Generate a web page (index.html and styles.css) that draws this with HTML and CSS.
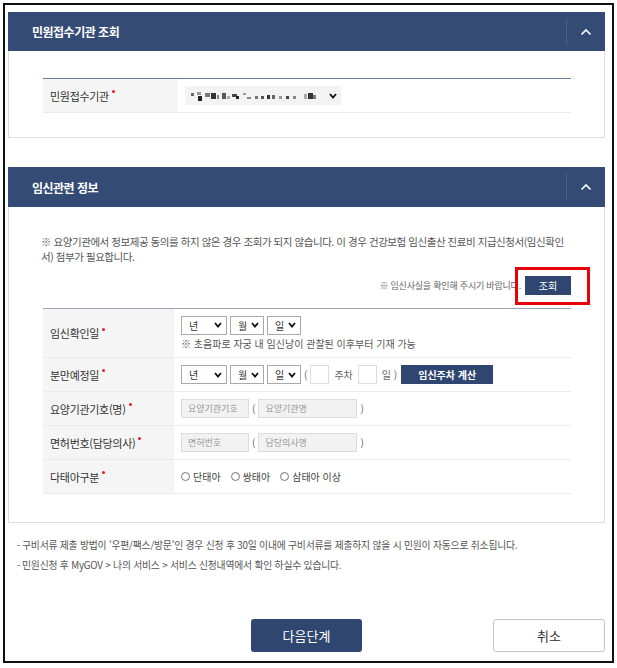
FILE: index.html
```html
<!DOCTYPE html>
<html lang="ko">
<head>
    <meta charset="UTF-8">
    <title>임신출산 진료비 신청</title>
    <link rel="stylesheet" href="styles.css">
</head>
<body>
    <div class="frame">
        <section class="panel">
            <div class="panel-head">
                <h2>민원접수기관 조회</h2>
                <span class="fold">
                    <svg width="12" height="8" viewBox="0 0 12 8"><path d="M1.5 6.5 L6 2 L10.5 6.5" fill="none" stroke="#fff" stroke-width="1.6"/></svg>
                </span>
            </div>
            <div class="panel-body body-1">
                <div class="form-table org-table">
                    <div class="row">
                        <div class="th">민원접수기관<span class="req"></span></div>
                        <div class="td">
                            <span class="select org-select">
                                <svg class="mosaic" width="140" height="12" viewBox="0 0 140 12">
                                    <rect x="2" y="3" width="3" height="3" fill="#666"/>
                                    <rect x="8" y="2" width="4" height="3" fill="#999"/>
                                    <rect x="9" y="6" width="4" height="5" fill="#222"/>
                                    <rect x="16" y="3" width="5" height="4" fill="#777"/>
                                    <rect x="22" y="3" width="5" height="6" fill="#333"/>
                                    <rect x="28" y="5" width="2" height="4" fill="#888"/>
                                    <rect x="33" y="3" width="4" height="6" fill="#555"/>
                                    <rect x="38" y="6" width="3" height="3" fill="#aaa"/>
                                    <rect x="43" y="4" width="5" height="3" fill="#444"/>
                                    <rect x="47" y="6" width="3" height="3" fill="#222"/>
                                    <rect x="54" y="3" width="3" height="2" fill="#999"/>
                                    <rect x="58" y="7" width="4" height="2" fill="#888"/>
                                    <rect x="66" y="6" width="3" height="3" fill="#777"/>
                                    <rect x="72" y="6" width="3" height="3" fill="#555"/>
                                    <rect x="78" y="5" width="3" height="4" fill="#333"/>
                                    <rect x="83" y="5" width="3" height="4" fill="#666"/>
                                    <rect x="90" y="6" width="3" height="3" fill="#999"/>
                                    <rect x="97" y="6" width="3" height="3" fill="#444"/>
                                    <rect x="104" y="6" width="3" height="3" fill="#888"/>
                                    <rect x="115" y="4" width="3" height="5" fill="#aaa"/>
                                    <rect x="119" y="3" width="5" height="6" fill="#333"/>
                                    <rect x="124" y="5" width="3" height="4" fill="#777"/>
                                </svg>
                                <svg class="chev" width="8" height="6" viewBox="0 0 8 6"><path d="M1 1 L4 4.5 L7 1" fill="none" stroke="#111" stroke-width="1.8"/></svg>
                            </span>
                        </div>
                    </div>
                </div>
            </div>
        </section>

        <section class="panel panel-2">
            <div class="panel-head">
                <h2>임신관련 정보</h2>
                <span class="fold">
                    <svg width="12" height="8" viewBox="0 0 12 8"><path d="M1.5 6.5 L6 2 L10.5 6.5" fill="none" stroke="#fff" stroke-width="1.6"/></svg>
                </span>
            </div>
            <div class="panel-body body-2">
                <p class="notice">※ 요양기관에서 정보제공 동의를 하지 않은 경우 조회가 되지 않습니다. 이 경우 건강보험 임신출산 진료비 지급신청서(임신확인서) 첨부가 필요합니다.</p>
                <div class="lookup">
                    <span class="lookup-text">※ 임신사실을 확인해 주시기 바랍니다.</span>
                    <button class="btn-navy btn-small">조회</button>
                    <span class="highlight"></span>
                </div>
                <div class="form-table info-table">
                    <div class="row row-tall">
                        <div class="th">임신확인일<span class="req"></span></div>
                        <div class="td">
                            <div class="inline">
                                <span class="select sel-year">년<svg width="8" height="6" viewBox="0 0 8 6"><path d="M1 1 L4 4.5 L7 1" fill="none" stroke="#111" stroke-width="1.8"/></svg></span>
                                <span class="select sel-short">월<svg width="8" height="6" viewBox="0 0 8 6"><path d="M1 1 L4 4.5 L7 1" fill="none" stroke="#111" stroke-width="1.8"/></svg></span>
                                <span class="select sel-short">일<svg width="8" height="6" viewBox="0 0 8 6"><path d="M1 1 L4 4.5 L7 1" fill="none" stroke="#111" stroke-width="1.8"/></svg></span>
                            </div>
                            <p class="hint">※ 초음파로 자궁 내 임신낭이 관찰된 이후부터 기재 가능</p>
                        </div>
                    </div>
                    <div class="row">
                        <div class="th">분만예정일<span class="req"></span></div>
                        <div class="td">
                            <div class="inline">
                                <span class="select sel-year">년<svg width="8" height="6" viewBox="0 0 8 6"><path d="M1 1 L4 4.5 L7 1" fill="none" stroke="#111" stroke-width="1.8"/></svg></span>
                                <span class="select sel-short">월<svg width="8" height="6" viewBox="0 0 8 6"><path d="M1 1 L4 4.5 L7 1" fill="none" stroke="#111" stroke-width="1.8"/></svg></span>
                                <span class="select sel-short">일<svg width="8" height="6" viewBox="0 0 8 6"><path d="M1 1 L4 4.5 L7 1" fill="none" stroke="#111" stroke-width="1.8"/></svg></span>
                                <span class="paren">(</span>
                                <span class="input input-tiny"></span>
                                <span class="unit">주차</span>
                                <span class="input input-tiny"></span>
                                <span class="unit">일 )</span>
                                <button class="btn-navy btn-calc">임신주차 계산</button>
                            </div>
                        </div>
                    </div>
                    <div class="row">
                        <div class="th">요양기관기호(명)<span class="req"></span></div>
                        <div class="td">
                            <div class="inline">
                                <span class="input input-code">요양기관기호</span>
                                <span class="paren">(</span>
                                <span class="input input-name">요양기관명</span>
                                <span class="paren">)</span>
                            </div>
                        </div>
                    </div>
                    <div class="row">
                        <div class="th">면허번호(담당의사)<span class="req"></span></div>
                        <div class="td">
                            <div class="inline">
                                <span class="input input-code">면허번호</span>
                                <span class="paren">(</span>
                                <span class="input input-name">담당의사명</span>
                                <span class="paren">)</span>
                            </div>
                        </div>
                    </div>
                    <div class="row">
                        <div class="th">다태아구분<span class="req"></span></div>
                        <div class="td">
                            <div class="inline radios">
                                <label class="radio"><span class="dot"></span>단태아</label>
                                <label class="radio"><span class="dot"></span>쌍태아</label>
                                <label class="radio"><span class="dot"></span>삼태아 이상</label>
                            </div>
                        </div>
                    </div>
                </div>
            </div>
        </section>

        <ul class="notes">
            <li>구비서류 제출 방법이 '우편/팩스/방문'인 경우 신청 후 30일 이내에 구비서류를 제출하지 않을 시 민원이 자동으로 취소됩니다.</li>
            <li>민원신청 후 MyGOV &gt; 나의 서비스 &gt; 서비스 신청내역에서 확인 하실수 있습니다.</li>
        </ul>

        <div class="actions">
            <span></span>
            <button class="btn-navy btn-next">다음단계</button>
            <button class="btn-cancel">취소</button>
        </div>
    </div>
</body>
</html>
```

FILE: styles.css
```css
html, body {
    margin: 0;
    padding: 0;
    background-color: #fff;
    font-family: "Noto Sans CJK KR", "Noto Sans", sans-serif;
    color: #333;
}
.frame {
    box-sizing: border-box;
    width: 611px;
    height: 660px;
    margin: 3px;
    border: 2px solid #111;
    padding: 7px 7px 0 3px;
}
.panel-head {
    display: flex;
    align-items: center;
    height: 39px;
    background-color: #344b76;
    color: #fff;
}
.panel-2 .panel-head {
    height: 40px;
}
.panel-head h2 {
    flex: 1;
    margin: 0;
    padding-left: 24px;
    font-size: 12px;
    font-weight: bold;
    letter-spacing: -0.5px;
}
.fold {
    display: flex;
    align-items: center;
    justify-content: center;
    width: 38px;
    height: 26px;
    border-left: 1px solid #4b5f87;
}
.panel-body {
    border: 1px solid #ddd;
    border-top: none;
}
.body-1 {
    padding: 27px 33px 24px 34px;
}
.panel-2 {
    margin-top: 29px;
}
.body-2 {
    padding: 27px 33px 28px 34px;
}

/* tables */
.form-table .row {
    display: flex;
    border-bottom: 1px solid #ebebeb;
}
.form-table .th {
    box-sizing: border-box;
    display: flex;
    align-items: center;
    padding-left: 7px;
    background-color: #f5f5f5;
    font-size: 11px;
    color: #333;
    letter-spacing: -0.3px;
}
.form-table .td {
    flex: 1;
    display: flex;
    flex-direction: column;
    justify-content: center;
    padding-left: 7px;
}
.org-table {
    border-top: 1px solid #6a7ca0;
}
.org-table .th {
    width: 135px;
    height: 33px;
}
.info-table {
    border-top: 1px solid #9ca4b3;
}
.info-table .th {
    width: 131px;
}
.info-table .row {
    height: 33px;
}
.info-table .row-tall {
    height: 48px;
}
.req {
    display: inline-block;
    width: 3px;
    height: 3px;
    margin: -8px 0 0 3px;
    border-radius: 50%;
    background-color: #e0202a;
}

/* controls */
.select {
    box-sizing: border-box;
    display: inline-flex;
    align-items: center;
    justify-content: space-between;
    height: 19px;
    padding: 0 4px 0 7px;
    border: 1px solid #a9a9a9;
    background-color: #fff;
    font-size: 10px;
    color: #333;
}
.org-select {
    width: 156px;
    padding-left: 4px;
    border: none;
    background-color: #f3f3f3;
}
.mosaic {
    filter: blur(0.4px);
}
.sel-year {
    width: 46px;
}
.sel-short {
    width: 34px;
}
.inline {
    display: flex;
    align-items: center;
    gap: 3px;
}
.paren, .unit {
    font-size: 10px;
    color: #666;
}
.unit {
    margin: 0 2px;
}
.input {
    box-sizing: border-box;
    display: inline-flex;
    align-items: center;
    height: 19px;
    padding-left: 6px;
    border: 1px solid #dcdcdc;
    background-color: #f2f2f2;
    font-size: 9px;
    color: #999;
}
.input-tiny {
    width: 19px;
    background-color: #fff;
}
.input-code {
    width: 68px;
}
.input-name {
    width: 99px;
}
.hint {
    margin: 1px 0 0;
    font-size: 10px;
    color: #555;
}
.radios {
    gap: 10px;
    font-size: 10px;
    color: #444;
}
.radio {
    display: inline-flex;
    align-items: center;
    gap: 3px;
}
.dot {
    width: 7px;
    height: 7px;
    border: 1px solid #777;
    border-radius: 50%;
}
.notice {
    margin: 0 0 0 -2px;
    font-size: 10.5px;
    line-height: 15px;
    color: #555;
    letter-spacing: -0.45px;
}
.lookup {
    position: relative;
    display: flex;
    justify-content: flex-end;
    align-items: center;
    gap: 4px;
    margin: 12px 0 13px;
}
.lookup-text {
    font-size: 9px;
    color: #666;
    letter-spacing: -0.2px;
}
.highlight {
    position: absolute;
    right: -19px;
    top: -9px;
    width: 75px;
    height: 38px;
    box-sizing: border-box;
    border: 3px solid #e8000b;
}

/* buttons */
button {
    font-family: inherit;
    cursor: pointer;
}
.btn-navy {
    border: none;
    background-color: #2f4670;
    color: #fff;
}
.btn-small {
    width: 46px;
    height: 19px;
    padding: 0;
    font-size: 10px;
}
.btn-calc {
    height: 19px;
    margin-left: -1px;
    padding: 0 17px;
    font-size: 10px;
    font-weight: bold;
}
.notes {
    margin: 12px 0 0;
    padding: 0 0 0 14px;
    list-style: none;
}
.notes li {
    position: relative;
    font-size: 9.8px;
    line-height: 20px;
    color: #555;
    letter-spacing: -0.2px;
}
.notes li::before {
    content: "";
    position: absolute;
    left: -5px;
    top: 10px;
    width: 3px;
    height: 1px;
    background-color: #999;
}
.actions {
    display: grid;
    grid-template-columns: 1fr auto 1fr;
    align-items: center;
    margin-top: 44px;
}
.btn-next {
    width: 111px;
    height: 33px;
    border-radius: 3px;
    font-size: 13px;
}
.btn-cancel {
    justify-self: end;
    width: 112px;
    height: 33px;
    border: 1px solid #c6c6c6;
    border-radius: 3px;
    background-color: #fff;
    color: #333;
    font-size: 13px;
}
```
